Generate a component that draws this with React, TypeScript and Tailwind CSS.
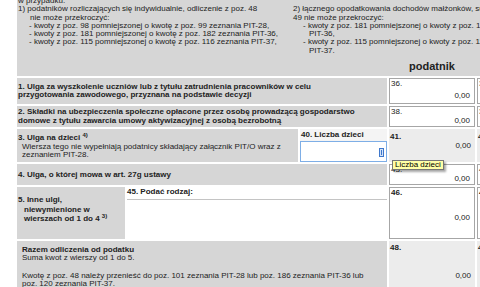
type CellProps = {
  no: string;
  value?: string;
  computed?: boolean;
  boldNo?: boolean;
  className?: string;
};

function ValueCell({ no, value = '0,00', computed = false, boldNo = false, className = '' }: CellProps) {
  const box = computed ? 'bg-[#ececec]' : 'border border-[#a6a6a6] bg-white';
  return (
    <div className={`flex flex-col ${box} ${className}`}>
      <span className={`pl-[1px] pt-[1px] leading-[8.5px] ${boldNo ? 'font-bold' : ''}`}>{no}</span>
      <span className="flex flex-1 items-center justify-end pr-[4px] leading-[8.5px]">{value}</span>
    </div>
  );
}

function CaretMark() {
  return (
    <svg width="5" height="9" viewBox="0 0 5 9" className="absolute right-[2px] top-[6px]">
      <rect x="0.5" y="0.5" width="4" height="8" fill="#d3e3f8" stroke="#3f78cc" />
      <line x1="2.5" y1="2" x2="2.5" y2="7" stroke="#3f78cc" />
    </svg>
  );
}

export default function App() {
  return (
    <div className="relative h-[287px] w-[480px] overflow-hidden bg-white font-['Liberation_Sans',Arial,sans-serif] text-[8px] text-[#222]">
      <div className="flex w-[560px] flex-col gap-[2px] pl-[17px]">
        {/* notes + column heading */}
        <div className="h-[76px] overflow-hidden bg-[#d6d6d6]">
          <div className="-mt-[3px] whitespace-nowrap pl-[1px] leading-[8.3px]">
            <p>w przypadku:</p>
            <div className="flex">
              <div className="w-[275px]">
                <p>1) podatników rozliczających się indywidualnie, odliczenie z poz. 48</p>
                <p className="pl-[12px]">nie może przekroczyć:</p>
                <p className="pl-[11px]">- kwoty z poz. 98 pomniejszonej o kwotę z poz. 99 zeznania PIT-28,</p>
                <p className="pl-[11px]">- kwoty z poz. 181 pomniejszonej o kwotę z poz. 182 zeznania PIT-36,</p>
                <p className="pl-[11px]">- kwoty z poz. 115 pomniejszonej o kwotę z poz. 116 zeznania PIT-37,</p>
              </div>
              <div className="w-[260px]">
                <p>2) łącznego opodatkowania dochodów małżonków, suma odliczeń z poz. 48 i</p>
                <p>49 nie może przekroczyć:</p>
                <p className="pl-[10px]">- kwoty z poz. 181 pomniejszonej o kwoty z poz. 182 zeznania</p>
                <p className="pl-[16px]">PIT-36,</p>
                <p className="pl-[10px]">- kwoty z poz. 115 pomniejszonej o kwoty z poz. 116 zeznania</p>
                <p className="pl-[16px]">PIT-37.</p>
              </div>
            </div>
          </div>
          <div className="mt-[5px] grid grid-cols-[370px_86px_86px] gap-x-[2px] text-[11px] font-bold leading-[13px]">
            <span />
            <span className="text-center">podatnik</span>
            <span className="text-center">małżonek</span>
          </div>
        </div>

        {/* 1 */}
        <div className="grid h-[26px] grid-cols-[370px_86px_86px] gap-x-[2px]">
          <div className="flex flex-col justify-center bg-[#d6d6d6] pl-[1px] font-bold leading-[8.5px]">
            <p>1. Ulga za wyszkolenie uczniów lub z tytułu zatrudnienia pracowników w celu</p>
            <p>przygotowania zawodowego, przyznana na podstawie decyzji</p>
          </div>
          <ValueCell no="36." />
          <ValueCell no="37." />
        </div>

        {/* 2 */}
        <div className="grid h-[21px] grid-cols-[370px_86px_86px] gap-x-[2px]">
          <div className="flex flex-col justify-center bg-[#d6d6d6] pl-[1px] font-bold leading-[8.5px]">
            <p>2. Składki na ubezpieczenia społeczne opłacone przez osobę prowadzącą gospodarstwo</p>
            <p>domowe z tytułu zawarcia umowy aktywizacyjnej z osobą bezrobotną</p>
          </div>
          <ValueCell no="38." className="[&>span:last-child]:flex-none" />
          <ValueCell no="39." className="[&>span:last-child]:flex-none" />
        </div>

        {/* 3 */}
        <div className="grid h-[33px] grid-cols-[281px_87px_86px_86px] gap-x-[2px]">
          <div className="whitespace-nowrap bg-[#d6d6d6] pl-[1px] pt-[5px] leading-[8.7px]">
            <p className="font-bold">
              3. Ulga na dzieci <sup className="text-[6px]">4)</sup>
            </p>
            <p className="pl-[4px]">Wiersza tego nie wypełniają podatnicy składający załącznik PIT/O wraz z</p>
            <p className="pl-[4px]">zeznaniem PIT-28.</p>
          </div>
          <div className="flex flex-col bg-[#f4f4f4]">
            <span className="pl-[1px] pt-[2px] font-bold leading-[8.5px]">40. Liczba dzieci</span>
            <div className="relative mt-[1px] flex-1 border border-[#7eaee6] bg-white">
              <CaretMark />
            </div>
          </div>
          <ValueCell no="41." computed boldNo className="[&>span:first-child]:pt-[4px] [&>span:last-child]:flex-none" />
          <ValueCell no="42." computed boldNo className="[&>span:first-child]:pt-[4px] [&>span:last-child]:flex-none" />
        </div>

        {/* 4 */}
        <div className="grid h-[21px] grid-cols-[370px_86px_86px] gap-x-[2px]">
          <div className="flex items-center bg-[#d6d6d6] pl-[1px] font-bold">
            <p>4. Ulga, o której mowa w art. 27g ustawy</p>
          </div>
          <ValueCell no="43." className="[&>span:last-child]:flex-none" />
          <ValueCell no="44." className="[&>span:last-child]:flex-none" />
        </div>

        {/* 5 */}
        <div className="grid h-[52px] grid-cols-[108px_260px_86px_86px] gap-x-[2px]">
          <div className="whitespace-nowrap bg-[#d6d6d6] pl-[1px] pt-[8px] font-bold leading-[9.5px]">
            <p>5. Inne ulgi,</p>
            <p className="pl-[6px]">niewymienione w</p>
            <p className="pl-[6px]">
              wierszach od 1 do 4 <sup className="text-[6px]">3)</sup>
            </p>
          </div>
          <div className="flex flex-col bg-white">
            <span className="pt-[1px] font-bold leading-[8.5px]">45. Podać rodzaj:</span>
            <div className="mt-[2px] flex-1 border-t border-[#c4c4c4] bg-white" />
          </div>
          <ValueCell no="46." boldNo />
          <ValueCell no="47." boldNo />
        </div>

        {/* razem */}
        <div className="grid h-[54px] grid-cols-[370px_86px_86px] gap-x-[2px]">
          <div className="bg-[#d6d6d6] pl-[5px] pt-[5px] leading-[8px]">
            <p className="font-bold">Razem odliczenia od podatku</p>
            <p>Suma kwot z wierszy od 1 do 5.</p>
            <p className="mt-[10px]">
              Kwotę z poz. 48 należy przenieść do poz. 101 zeznania PIT-28 lub poz. 186 zeznania PIT-36 lub
            </p>
            <p>poz. 120 zeznania PIT-37.</p>
          </div>
          <ValueCell no="48." computed boldNo className="pt-[2px] [&>span:last-child]:pt-[4px]" />
          <ValueCell no="49." computed boldNo className="pt-[2px] [&>span:last-child]:pt-[4px]" />
        </div>
      </div>

      {/* tooltip over field 43 */}
      <div className="absolute left-[392px] top-[160px] border border-[#767676] bg-[#ffffa6] px-[2px] leading-[8px] text-black shadow-[2px_2px_2px_rgba(0,0,0,0.35)]">
        Liczba dzieci
      </div>
    </div>
  );
}
